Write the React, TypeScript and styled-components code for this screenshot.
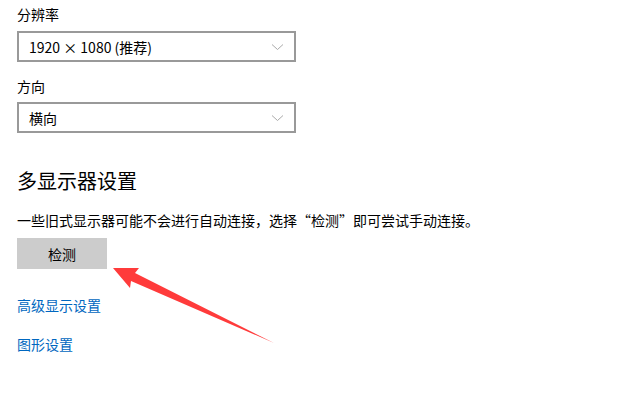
import React from "react";
import styled, { createGlobalStyle } from "styled-components";

const Global = createGlobalStyle`
  html, body { margin: 0; padding: 0; background: #fff; }
  body { font-family: "Noto Sans CJK SC", "Noto Sans", sans-serif; color: #000; }
`;

const Page = styled.div`
  position: relative;
  width: 628px;
  height: 412px;
  padding: 4px 0 0 17px;
  box-sizing: border-box;
  display: flex;
  flex-direction: column;
  align-items: flex-start;
`;

const Label = styled.div<{ $mt?: number }>`
  font-size: 14px;
  line-height: 20px;
  margin-top: ${(p) => p.$mt ?? 0}px;
`;

const Select = styled.div<{ $mt: number }>`
  margin-top: ${(p) => p.$mt}px;
  width: 279px;
  height: 31px;
  box-sizing: border-box;
  border: 2px solid #999;
  display: flex;
  align-items: center;
  justify-content: space-between;
  padding: 0 10px 0 10px;
  font-size: 14px;
  font-family: "Noto Sans CJK SC", "Noto Sans", sans-serif;
`;

const Heading = styled.div`
  margin-top: 34px;
  font-size: 20px;
  line-height: 28px;
`;

const Body = styled.div`
  margin-top: 15px;
  font-size: 14px;
  line-height: 20px;
`;

const Button = styled.div`
  margin-top: 8px;
  width: 90px;
  height: 31px;
  background: #cccccc;
  display: flex;
  align-items: center;
  justify-content: center;
  font-size: 14px;
`;

const Link = styled.div<{ $mt: number }>`
  margin-top: ${(p) => p.$mt}px;
  font-size: 14px;
  line-height: 20px;
  color: #0067c0;
`;

const Arrow = styled.svg`
  position: absolute;
  left: 0;
  top: 0;
  pointer-events: none;
`;

const Chevron = () => (
  <svg width="13" height="8" viewBox="0 0 13 8">
    <polyline points="1,1.5 6.5,6.5 12,1.5" fill="none" stroke="#a0a0a0" strokeWidth="0.9" />
  </svg>
);

export default function App() {
  return (
    <>
      <Global />
      <Page>
        <Label>分辨率</Label>
        <Select $mt={7}>
          <span>1920 × 1080 (推荐)</span>
          <Chevron />
        </Select>
        <Label $mt={14}>方向</Label>
        <Select $mt={6}>
          <span>横向</span>
          <Chevron />
        </Select>
        <Heading>多显示器设置</Heading>
        <Body>一些旧式显示器可能不会进行自动连接，选择“检测”即可尝试手动连接。</Body>
        <Button>检测</Button>
        <Link $mt={26}>高级显示设置</Link>
        <Link $mt={19}>图形设置</Link>
        <Arrow width="628" height="412" viewBox="0 0 628 412">
          <polygon
            points="113,268 139,268 135,273 274,343 131,281 130,288"
            fill="#ff3b3b"
          />
        </Arrow>
      </Page>
    </>
  );
}
